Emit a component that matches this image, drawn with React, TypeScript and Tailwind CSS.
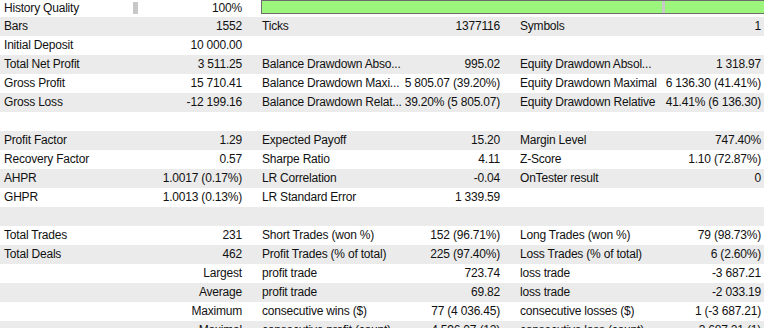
import React from "react";

type Row = {
  l1?: string;
  v1?: string;
  l2?: string;
  v2?: string;
  l3?: string;
  v3?: string;
};

const rows: Row[] = [
  { l1: "Bars", v1: "1552", l2: "Ticks", v2: "1377116", l3: "Symbols", v3: "1" },
  { l1: "Initial Deposit", v1: "10 000.00" },
  {
    l1: "Total Net Profit",
    v1: "3 511.25",
    l2: "Balance Drawdown Abso...",
    v2: "995.02",
    l3: "Equity Drawdown Absol...",
    v3: "1 318.97",
  },
  {
    l1: "Gross Profit",
    v1: "15 710.41",
    l2: "Balance Drawdown Maxi...",
    v2: "5 805.07 (39.20%)",
    l3: "Equity Drawdown Maximal",
    v3: "6 136.30 (41.41%)",
  },
  {
    l1: "Gross Loss",
    v1: "-12 199.16",
    l2: "Balance Drawdown Relat...",
    v2: "39.20% (5 805.07)",
    l3: "Equity Drawdown Relative",
    v3: "41.41% (6 136.30)",
  },
  {},
  { l1: "Profit Factor", v1: "1.29", l2: "Expected Payoff", v2: "15.20", l3: "Margin Level", v3: "747.40%" },
  { l1: "Recovery Factor", v1: "0.57", l2: "Sharpe Ratio", v2: "4.11", l3: "Z-Score", v3: "1.10 (72.87%)" },
  { l1: "AHPR", v1: "1.0017 (0.17%)", l2: "LR Correlation", v2: "-0.04", l3: "OnTester result", v3: "0" },
  { l1: "GHPR", v1: "1.0013 (0.13%)", l2: "LR Standard Error", v2: "1 339.59" },
  {},
  {
    l1: "Total Trades",
    v1: "231",
    l2: "Short Trades (won %)",
    v2: "152 (96.71%)",
    l3: "Long Trades (won %)",
    v3: "79 (98.73%)",
  },
  {
    l1: "Total Deals",
    v1: "462",
    l2: "Profit Trades (% of total)",
    v2: "225 (97.40%)",
    l3: "Loss Trades (% of total)",
    v3: "6 (2.60%)",
  },
  { v1: "Largest", l2: "profit trade", v2: "723.74", l3: "loss trade", v3: "-3 687.21" },
  { v1: "Average", l2: "profit trade", v2: "69.82", l3: "loss trade", v3: "-2 033.19" },
  {
    v1: "Maximum",
    l2: "consecutive wins ($)",
    v2: "77 (4 036.45)",
    l3: "consecutive losses ($)",
    v3: "1 (-3 687.21)",
  },
  {
    v1: "Maximal",
    l2: "consecutive profit (count)",
    v2: "4 596.07 (12)",
    l3: "consecutive loss (count)",
    v3: "-3 687.21 (1)",
  },
];

function DataRow({ r, gray }: { r: Row; gray: boolean }) {
  return (
    <div className={`flex h-[19px] shrink-0 items-center whitespace-nowrap ${gray ? "bg-[#ebebeb]" : "bg-white"}`}>
      <div className="w-[130px] shrink-0 pl-[4px]">{r.l1 ?? ""}</div>
      <div className="w-[128px] shrink-0 pr-[16px] text-right">{r.v1 ?? ""}</div>
      <div className="w-[146px] shrink-0 pl-[4px]">{r.l2 ?? ""}</div>
      <div className="w-[112px] shrink-0 pr-[16px] text-right">{r.v2 ?? ""}</div>
      <div className="w-[144px] shrink-0 pl-[4px]">{r.l3 ?? ""}</div>
      <div className="w-[104px] shrink-0 pr-[3px] text-right">{r.v3 ?? ""}</div>
    </div>
  );
}

export default function App() {
  return (
    <div
      className="flex h-[328px] w-[764px] flex-col overflow-hidden bg-white text-[12px] leading-[19px] tracking-[-0.2px] text-[#111]"
      style={{ fontFamily: '"Liberation Sans", Arial, sans-serif' }}
    >
      <div className="flex h-[17px] shrink-0 whitespace-nowrap bg-white">
        <div className="flex h-[17px] w-[130px] shrink-0 items-center pl-[4px] leading-[17px]">History Quality</div>
        <div className="relative flex h-[17px] w-[128px] shrink-0 items-center justify-end pr-[16px] leading-[17px]">
          <div className="absolute left-[3px] top-[2px] h-[12px] w-[5px] bg-[#c8c8c8]" />
          100%
        </div>
        <div className="flex h-[17px] w-[506px] shrink-0 overflow-hidden pl-[3px]">
          <div className="flex h-[14px] w-[520px] shrink-0 border border-[#6d6d6d] bg-[#9cf57c]">
            <div className="w-[400px] shrink-0" />
            <div className="w-[3px] shrink-0 bg-[#c8c8c8]" />
            <div className="flex-1" />
          </div>
        </div>
      </div>
      {rows.map((r, i) => (
        <DataRow key={i} r={r} gray={i % 2 === 0} />
      ))}
    </div>
  );
}
